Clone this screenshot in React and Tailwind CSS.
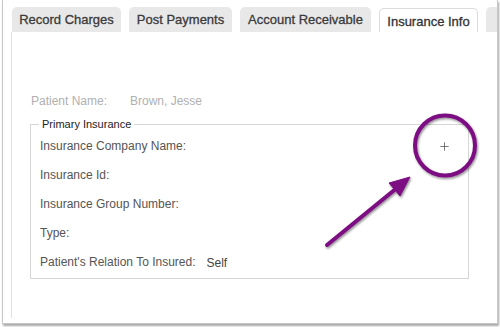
import { Plus } from "lucide-react";

const tabs = [
  { label: "Record Charges", w: "w-[109px]" },
  { label: "Post Payments", w: "w-[103px]" },
  { label: "Account Receivable", w: "w-[131px]" },
  { label: "Insurance Info", w: "w-[99px]", active: true },
  { label: "", w: "w-[90px]" },
];

const rows = [
  { label: "Insurance Company Name:", add: true },
  { label: "Insurance Id:" },
  { label: "Insurance Group Number:" },
  { label: "Type:" },
  { label: "Patient's Relation To Insured:", value: "Self" },
];

function Tab({ label, w, active }) {
  if (active) {
    return (
      <div
        className={`${w} mt-[1px] flex h-[24px] shrink-0 items-center justify-center rounded-t-[5px] border border-b-0 border-[#dcdcdc] bg-white pt-[2px] text-[13px] text-[#333] [-webkit-text-stroke:0.3px_#333]`}
      >
        {label}
      </div>
    );
  }
  return (
    <div
      className={`${w} flex h-[25px] shrink-0 items-center justify-center rounded-t-[5px] bg-[#e8e8e8] text-[13px] text-[#3a3a3a] [-webkit-text-stroke:0.3px_#3a3a3a]`}
    >
      {label}
    </div>
  );
}

export default function App() {
  return (
    <div className="relative h-[327px] w-[500px] overflow-hidden bg-white font-['Liberation_Sans',Arial,sans-serif]">
      <div className="ml-[2px] h-[324px] w-[496px] overflow-hidden border-r border-b border-l border-[#c8c8c8] bg-white shadow-[1px_2px_2px_rgba(0,0,0,0.35)]">
        <div className="flex gap-[8px] pt-[7px] pl-[9px]">
          {tabs.map((t, i) => (
            <Tab key={i} {...t} />
          ))}
        </div>
        <div className="ml-[8px] h-[286px] border-l border-[#e2e2e2]">
          <div className="flex pt-[61px] pl-[19px] text-[12px] leading-[16px] text-[#b0b0b0]">
            <span className="w-[99px]">Patient Name:</span>
            <span>Brown, Jesse</span>
          </div>
          <fieldset className="mt-[9px] ml-[18px] h-[161px] w-[439px] border border-[#d6d6d6] pl-[9px]">
            <legend className="-ml-[1px] px-[3px] text-[11px] leading-[13px] text-[#222]">
              Primary Insurance
            </legend>
            {rows.map((r) => (
              <div
                key={r.label}
                className="flex h-[29px] items-center text-[12px] leading-[16px] text-[#555]"
              >
                <span>{r.label}</span>
                {r.value && <span className="ml-[11px] mt-[3px] text-[#444]">{r.value}</span>}
                {r.add && (
                  <Plus size={13} strokeWidth={1.3} className="mr-[17px] ml-auto mt-[2px] text-[#444]" />
                )}
              </div>
            ))}
          </fieldset>
        </div>
      </div>

      <svg
        className="pointer-events-none absolute top-0 left-0"
        width="500"
        height="327"
        viewBox="0 0 500 327"
      >
        <defs>
          <filter id="sh" x="-20%" y="-20%" width="140%" height="140%">
            <feDropShadow dx="1" dy="1.5" stdDeviation="1" floodColor="#000" floodOpacity="0.45" />
          </filter>
        </defs>
        <g filter="url(#sh)" fill="none" stroke="#7c0f82">
          <circle cx="445" cy="145.5" r="30" strokeWidth="4" />
          <line x1="327" y1="245" x2="398" y2="187" strokeWidth="4" strokeLinecap="round" />
          <polygon points="410,177 400,196 389,183" fill="#7c0f82" strokeWidth="1" strokeLinejoin="round" />
        </g>
      </svg>
    </div>
  );
}
